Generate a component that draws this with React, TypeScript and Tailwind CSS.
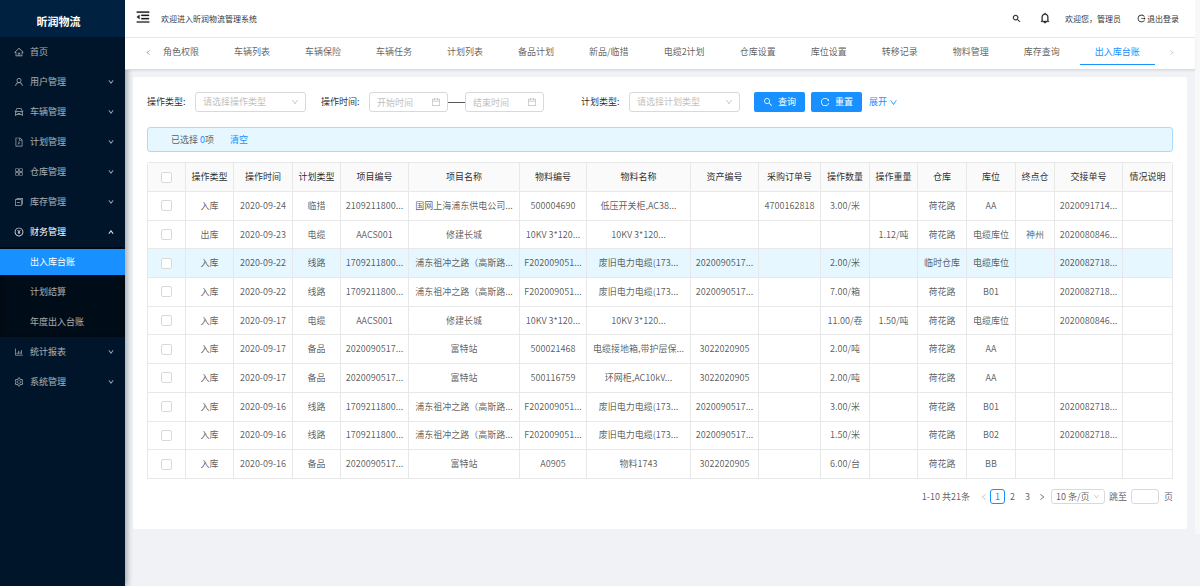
import React from 'react';
import {
  AiOutlineHome, AiOutlineUser, AiOutlineCar, AiOutlineFilePpt, AiOutlineAppstore, AiOutlineSwitcher,
  AiOutlinePayCircle, AiOutlineBarChart, AiOutlineSetting, AiOutlineMenuFold, AiOutlineBell,
  AiOutlineLogout, AiOutlineSearch, AiOutlineReload, AiOutlineCalendar, AiOutlineDown, AiOutlineUp,
  AiOutlineLeft, AiOutlineRight,
} from 'react-icons/ai';
import type { IconType } from 'react-icons';

type MenuEntry = { label: string; icon: IconType; leaf?: boolean; children?: string[] };

const menu: MenuEntry[] = [
  { label: '首页', icon: AiOutlineHome, leaf: true },
  { label: '用户管理', icon: AiOutlineUser },
  { label: '车辆管理', icon: AiOutlineCar },
  { label: '计划管理', icon: AiOutlineFilePpt },
  { label: '仓库管理', icon: AiOutlineAppstore },
  { label: '库存管理', icon: AiOutlineSwitcher },
  { label: '财务管理', icon: AiOutlinePayCircle, children: ['出入库台账', '计划结算', '年度出入台账'] },
  { label: '统计报表', icon: AiOutlineBarChart },
  { label: '系统管理', icon: AiOutlineSetting },
];

const tabs = ['角色权限', '车辆列表', '车辆保险', '车辆任务', '计划列表', '备品计划', '新品/临措', '电缆2计划', '仓库设置', '库位设置', '转移记录', '物料管理', '库存查询', '出入库台账'];

const columns: [string, string][] = [
  ['操作类型', 'w-[48px]'], ['操作时间', 'w-[59px]'], ['计划类型', 'w-[48px]'], ['项目编号', 'w-[68px]'],
  ['项目名称', 'w-[111px]'], ['物料编号', 'w-[67px]'], ['物料名称', 'w-[104px]'], ['资产编号', 'w-[68px]'],
  ['采购订单号', 'w-[62px]'], ['操作数量', 'w-[49px]'], ['操作重量', 'w-[48px]'], ['仓库', 'w-[49px]'],
  ['库位', 'w-[49px]'], ['终点仓', 'w-[39px]'], ['交接单号', 'w-[68px]'], ['情况说明', 'w-[50px]'],
];

const rows: string[][] = [
  ['入库', '2020-09-24', '临措', '2109211800...', '国网上海浦东供电公司...', '500004690', '低压开关柜,AC38...', '', '4700162818', '3.00/米', '', '荷花路', 'AA', '', '2020091714...', ''],
  ['出库', '2020-09-23', '电缆', 'AACS001', '修建长城', '10KV 3*120...', '10KV 3*120...', '', '', '', '1.12/吨', '荷花路', '电缆库位', '神州', '2020080846...', ''],
  ['入库', '2020-09-22', '线路', '1709211800...', '浦东祖冲之路（高斯路...', 'F202009051...', '废旧电力电缆(173...', '2020090517...', '', '2.00/米', '', '临时仓库', '电缆库位', '', '2020082718...', ''],
  ['入库', '2020-09-22', '线路', '1709211800...', '浦东祖冲之路（高斯路...', 'F202009051...', '废旧电力电缆(173...', '2020090517...', '', '7.00/箱', '', '荷花路', 'B01', '', '2020082718...', ''],
  ['入库', '2020-09-17', '电缆', 'AACS001', '修建长城', '10KV 3*120...', '10KV 3*120...', '', '', '11.00/卷', '1.50/吨', '荷花路', '电缆库位', '', '2020080846...', ''],
  ['入库', '2020-09-17', '备品', '2020090517...', '富特站', '500021468', '电缆接地箱,带护层保...', '3022020905', '', '2.00/吨', '', '荷花路', 'AA', '', '', ''],
  ['入库', '2020-09-17', '备品', '2020090517...', '富特站', '500116759', '环网柜,AC10kV...', '3022020905', '', '2.00/吨', '', '荷花路', 'AA', '', '', ''],
  ['入库', '2020-09-16', '线路', '1709211800...', '浦东祖冲之路（高斯路...', 'F202009051...', '废旧电力电缆(173...', '2020090517...', '', '3.00/米', '', '荷花路', 'B01', '', '2020082718...', ''],
  ['入库', '2020-09-16', '线路', '1709211800...', '浦东祖冲之路（高斯路...', 'F202009051...', '废旧电力电缆(173...', '2020090517...', '', '1.50/米', '', '荷花路', 'B02', '', '2020082718...', ''],
  ['入库', '2020-09-16', '备品', '2020090517...', '富特站', 'A0905', '物料1743', '3022020905', '', '6.00/台', '', '荷花路', 'BB', '', '', ''],
];

function Sidebar() {
  return (
    <aside className="relative z-10 w-[125px] flex-none bg-[#001529] text-white/65 shadow-[2px_0_6px_rgba(0,21,41,0.35)]">
      <h1 className="flex h-[37px] items-center justify-center bg-[#002140] pt-1 pr-2 text-[11px] font-bold text-white">昕润物流</h1>
      <nav>
        <ul>
          {menu.map(({ label, icon: Icon, leaf, children }) => (
            <li key={label}>
              <button className={`flex h-[30px] w-full items-center gap-1.5 pr-[11px] pl-3.5 ${children ? 'text-white' : ''}`}>
                <Icon className="size-2.5" />
                <span className="flex-1 text-left">{label}</span>
                {!leaf && (children ? <AiOutlineUp className="size-[6px] stroke-[80]" /> : <AiOutlineDown className="size-[6px] stroke-[60]" />)}
              </button>
              {children && (
                <ul className="bg-[#000c17] shadow-[inset_0_2px_5px_rgba(0,0,0,0.45)]">
                  {children.map((child, i) => (
                    <li key={child} className="py-0.5">
                      <a href="#" className={`flex h-[26px] items-center pl-[30px] ${i === 0 ? 'bg-[#1890ff] text-white' : ''}`}>{child}</a>
                    </li>
                  ))}
                </ul>
              )}
            </li>
          ))}
        </ul>
      </nav>
    </aside>
  );
}

function Header() {
  return (
    <header className="flex h-[38px] items-center border-b border-[#e8e8e8] bg-white pr-4 pl-2.5 text-[8px] text-black/85">
      <button aria-label="收起菜单" className="pb-1"><AiOutlineMenuFold className="size-4 stroke-[20]" /></button>
      <span className="ml-2.5 flex-1">欢迎进入昕润物流管理系统</span>
      <button aria-label="搜索"><AiOutlineSearch className="size-[9px] stroke-[40]" /></button>
      <button aria-label="通知" className="ml-[18px] pb-0.5"><AiOutlineBell className="size-3 stroke-[30]" /></button>
      <span className="ml-3.5">欢迎您，管理员</span>
      <a href="#" className="ml-4 flex items-center gap-px"><AiOutlineLogout className="size-[9px] stroke-[20]" />退出登录</a>
    </header>
  );
}

function TabBar() {
  return (
    <nav className="flex h-8 items-start overflow-hidden border-b border-[#d9dbe0] bg-white pl-5 shadow-[0_1px_2px_rgba(0,21,41,0.08)]">
      <button aria-label="上一页标签" className="flex h-[29px] w-[18px] flex-none items-center"><AiOutlineLeft className="size-[7px] text-black/45" /></button>
      <div className="flex gap-[35px]">
        {tabs.map((tab, i) => (
          <a key={tab} href="#" className={`h-[27px] flex-none leading-[27px] ${i === tabs.length - 1 ? '-mx-[15px] border-b border-[#1890ff] px-[15px] text-[#1890ff]' : ''}`}>{tab}</a>
        ))}
      </div>
      <button aria-label="下一页标签" className="ml-7 flex h-[29px] items-center"><AiOutlineRight className="size-[7px] text-black/25" /></button>
    </nav>
  );
}

function SelectBox({ id, text }: { id: string; text: string }) {
  return (
    <div className="relative w-[111px]">
      <select id={id} className="h-5 w-full appearance-none rounded-[3px] border border-[#d9d9d9] bg-white px-[7px] text-[#bfbfbf]">
        <option>{text}</option>
      </select>
      <AiOutlineDown className="pointer-events-none absolute top-1.5 right-[7px] size-2 text-[#bfbfbf]" />
    </div>
  );
}

function DateBox({ id, text }: { id: string; text: string }) {
  return (
    <div className="relative w-[79px]">
      <input id={id} aria-label={text} placeholder={text} className="h-5 w-full rounded-[3px] border border-[#d9d9d9] pr-5 pl-[7px] placeholder:text-[#bfbfbf]" />
      <AiOutlineCalendar className="pointer-events-none absolute top-[5px] right-[7px] size-2.5 text-[#bfbfbf]" />
    </div>
  );
}

function Filters() {
  return (
    <form className="flex items-center text-black/85" onSubmit={(e) => e.preventDefault()}>
      <label htmlFor="op-type" className="w-12">操作类型:</label>
      <SelectBox id="op-type" text="请选择操作类型" />
      <label htmlFor="start" className="ml-[15px] w-12">操作时间:</label>
      <DateBox id="start" text="开始时间" />
      <span className="h-px w-[17px] bg-black/65" />
      <DateBox id="end" text="结束时间" />
      <label htmlFor="plan-type" className="ml-[37px] w-12">计划类型:</label>
      <SelectBox id="plan-type" text="请选择计划类型" />
      <button className="ml-3.5 flex h-5 w-[51px] items-center justify-center gap-[5px] rounded-[2px] bg-[#1890ff] text-white"><AiOutlineSearch className="size-2.5" />查询</button>
      <button type="reset" className="ml-1.5 flex h-5 w-[51px] items-center justify-center gap-[5px] rounded-[2px] bg-[#1890ff] text-white"><AiOutlineReload className="size-2.5" />重置</button>
      <a href="#" className="ml-[7px] flex items-center gap-0.5 text-[#1890ff]">展开<AiOutlineDown className="size-[9px]" /></a>
    </form>
  );
}

function Check({ label }: { label: string }) {
  return <input type="checkbox" aria-label={label} className="mx-auto block size-[11px] appearance-none rounded-[2px] border border-[#d9d9d9] bg-white checked:bg-[#1890ff]" />;
}

function DataTable() {
  return (
    <div className="mt-2.5 overflow-hidden rounded-t-[3px]">
      <table className="h-[317px] w-full table-fixed border-collapse text-center whitespace-nowrap">
        <thead className="bg-[#fafafa] text-black/85">
          <tr className="h-[29px]">
            <th className="w-[38px] border border-[#e8e8e8] p-0"><Check label="全选" /></th>
            {columns.map(([name, width]) => (
              <th key={name} className={`border border-[#e8e8e8] p-0 font-normal ${width}`}>{name}</th>
            ))}
          </tr>
        </thead>
        <tbody>
          {rows.map((row, r) => (
            <tr key={r} className={r === 2 ? 'bg-[#e6f7ff]' : ''}>
              <td className="border border-[#e8e8e8] p-0"><Check label={`选择第${r + 1}行`} /></td>
              {row.map((cell, c) => <td key={c} className="border border-[#e8e8e8] p-0">{cell}</td>)}
            </tr>
          ))}
        </tbody>
      </table>
    </div>
  );
}

function Pagination() {
  return (
    <div className="mt-2.5 flex h-[15px] items-center justify-end">
      <span>1-10 共21条</span>
      <button aria-label="上一页" className="ml-2 flex w-3 justify-center text-black/25"><AiOutlineLeft className="size-2" /></button>
      <button className="flex h-[15px] w-[15px] items-center justify-center rounded-[3px] border border-[#1890ff] text-[#1890ff]">1</button>
      <button className="w-[15px] text-center">2</button>
      <button className="w-[15px] text-center">3</button>
      <button aria-label="下一页" className="flex w-[15px] justify-center"><AiOutlineRight className="size-2" /></button>
      <div className="relative ml-px w-[54px]">
        <select aria-label="每页条数" className="block h-[15px] w-full appearance-none rounded-[3px] border border-[#d9d9d9] bg-white pl-1">
          <option>10 条/页</option>
        </select>
        <AiOutlineDown className="pointer-events-none absolute top-1 right-[5px] size-[7px] text-[#bfbfbf]" />
      </div>
      <label htmlFor="jump" className="mx-1">跳至</label>
      <input id="jump" className="h-[15px] w-7 rounded-[3px] border border-[#d9d9d9]" />
      <span className="ml-[5px]">页</span>
    </div>
  );
}

export default function App() {
  return (
    <div className="flex min-h-screen bg-[#f0f2f5] font-['Noto_Sans_CJK_SC',sans-serif] text-[9px] leading-[14px] text-black/65">
      <Sidebar />
      <div className="flex min-w-0 flex-1 items-start">
        <div className="min-w-0 flex-1">
          <div className="relative z-20">
            <Header />
            <TabBar />
          </div>
          <main className="mx-2 mt-[7px] rounded-[2px] bg-white px-[14px] pt-[15px] pb-[25px]">
            <Filters />
            <div className="mt-[15px] flex h-[25px] items-center rounded-[3px] border border-[#a9dcfb] bg-[#e6f7ff] pl-[23px]">
              <span>已选择 <a href="#" className="text-[#1890ff]">0</a>项</span>
              <a href="#" className="ml-4 text-[#1890ff]">清空</a>
            </div>
            <DataTable />
            <Pagination />
          </main>
        </div>
        <div className="h-[534px] w-[5px] flex-none bg-[#f8f8f8]" />
      </div>
    </div>
  );
}
